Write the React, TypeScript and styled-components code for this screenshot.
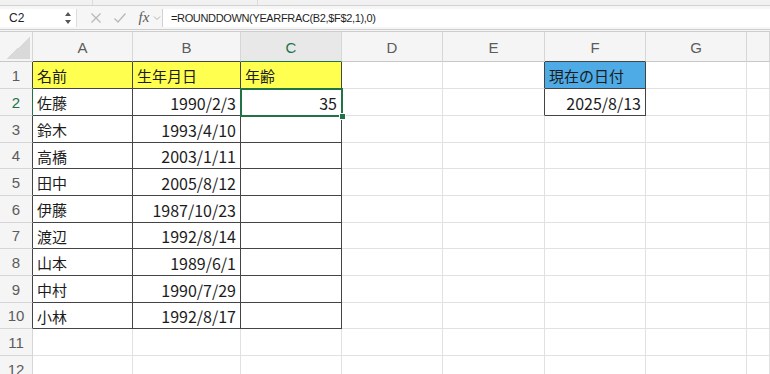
import React, { FC } from 'react';
import styled, { createGlobalStyle } from 'styled-components';

const DARK = '#444444';
const GRID = '#e1e1e1';
const HEAD_LINE = '#d6d6d6';
const GREEN = '#217346';

const GlobalStyle = createGlobalStyle`
  html, body {
    margin: 0;
    padding: 0;
    background: #ffffff;
  }
  body {
    width: 770px;
    height: 374px;
    overflow: hidden;
    font-family: 'Noto Sans CJK JP', 'Noto Sans', sans-serif;
  }
`;

const Window = styled.div`
  display: flex;
  flex-direction: column;
  width: 770px;
  height: 374px;
  overflow: hidden;
`;

const RibbonEdge = styled.div`
  display: grid;
  flex-shrink: 0;
  grid-template-columns: 93px 165px 1fr;
  height: 5px;
  background: #f1f1f1;
  border-bottom: 1px solid #d3d3d3;
`;

const RibbonPart = styled.div`
  border-right: 1px solid #dcdcdc;
`;

const FormulaBar = styled.div`
  display: flex;
  flex-shrink: 0;
  align-items: flex-start;
  height: 23px;
  background: #f6f6f6;
  border-bottom: 3px double #cdcdcd;
`;

const NameBox = styled.div`
  display: flex;
  align-items: center;
  justify-content: space-between;
  box-sizing: border-box;
  width: 77px;
  height: 18px;
  margin-top: 3px;
  padding: 0 4px 0 9px;
  background: #ffffff;
  border-right: 1px solid #dddddd;
  font-family: 'Liberation Sans', Arial, sans-serif;
  font-size: 12px;
  color: #222222;
`;

const Tools = styled.div`
  display: flex;
  align-items: center;
  height: 23px;
  width: 85px;
  padding-left: 12px;
  box-sizing: border-box;
`;

const ToolIcon = styled.span<{ $w: number }>`
  display: flex;
  align-items: center;
  justify-content: center;
  width: ${(p) => p.$w}px;
  height: 23px;
`;

const Fx = styled.span`
  font-family: 'Liberation Serif', 'Times New Roman', serif;
  font-style: italic;
  font-size: 15px;
  color: #5a5a5a;
  line-height: 23px;
`;

const FormulaInput = styled.div`
  flex: 1;
  height: 18px;
  margin-top: 3px;
  padding-left: 8px;
  background: #ffffff;
  border-left: 1px solid #d2d2d2;
  font-family: 'Liberation Sans', Arial, sans-serif;
  font-size: 11px;
  letter-spacing: -0.35px;
  line-height: 18px;
  color: #1f1f1f;
`;

const Sheet = styled.div`
  display: grid;
  flex-shrink: 0;
  grid-template-columns: 33px 100px 108px 101px 101px 102px 101px 101px 1fr;
  grid-template-rows: 30px 27px 27px 27px 26px 27px 27px 26px 27px 27px 26px 27px 27px;
`;

const Corner = styled.div`
  position: relative;
  box-sizing: border-box;
  background: #f5f5f5;
  border-right: 1px solid ${HEAD_LINE};
  border-bottom: 1px solid #c8c8c8;

  &::after {
    content: '';
    position: absolute;
    right: 2px;
    bottom: 2px;
    width: 24px;
    height: 22px;
    background: linear-gradient(to bottom right, transparent 50%, #d9d9d9 50%);
  }
`;

const ColHead = styled.div<{ $active?: boolean; $bottom: string }>`
  display: flex;
  align-items: center;
  justify-content: center;
  box-sizing: border-box;
  background: ${(p) => (p.$active ? '#e8e8e8' : '#f5f5f5')};
  border-right: 1px solid ${HEAD_LINE};
  border-bottom: 1px solid ${(p) => p.$bottom};
  font-family: 'Liberation Sans', Arial, sans-serif;
  font-size: 15px;
  color: ${(p) => (p.$active ? GREEN : '#5c5c5c')};
  padding-top: 1px;
`;

const RowHead = styled.div<{ $active?: boolean; $right: string }>`
  display: flex;
  align-items: center;
  justify-content: center;
  box-sizing: border-box;
  background: #f5f5f5;
  border-right: 1px solid ${(p) => p.$right};
  border-bottom: 1px solid ${HEAD_LINE};
  font-family: 'Liberation Sans', Arial, sans-serif;
  font-size: 15px;
  color: ${(p) => (p.$active ? GREEN : '#5c5c5c')};
`;

const Cell = styled.div<{ $right: string; $bottom: string; $fill?: string; $num?: boolean; $selected?: boolean }>`
  position: ${(p) => (p.$selected ? 'relative' : 'static')};
  display: flex;
  align-items: center;
  justify-content: ${(p) => (p.$num ? 'flex-end' : 'flex-start')};
  box-sizing: border-box;
  padding: 1px 4px 0 4px;
  background: ${(p) => p.$fill || '#ffffff'};
  border-right: 1px solid ${(p) => p.$right};
  border-bottom: 1px solid ${(p) => p.$bottom};
  font-size: ${(p) => (p.$num ? '16px' : '15px')};
  color: #1c1c1c;
  white-space: nowrap;

  ${(p) => p.$selected && `
    &::before {
      content: '';
      position: absolute;
      top: -1px;
      left: -1px;
      right: -2px;
      bottom: -2px;
      border: 2px solid ${GREEN};
    }
    &::after {
      content: '';
      position: absolute;
      right: -5px;
      bottom: -5px;
      width: 5px;
      height: 5px;
      background: ${GREEN};
      border: 1px solid #ffffff;
      z-index: 2;
    }
  `}
`;

const Spinner: FC = () => (
  <svg width='8' height='14' viewBox='0 0 8 14'>
    <path d='M4 1 L7 5 L1 5 Z' fill='#555' />
    <path d='M4 13 L7 9 L1 9 Z' fill='#555' />
  </svg>
);

const CrossIcon: FC = () => (
  <svg width='12' height='12' viewBox='0 0 12 12'>
    <path d='M1.5 1.5 L10.5 10.5 M10.5 1.5 L1.5 10.5' stroke='#b8b8b8' strokeWidth='1.3' fill='none' />
  </svg>
);

const CheckIcon: FC = () => (
  <svg width='14' height='12' viewBox='0 0 14 12'>
    <path d='M1.5 6.5 L5 10 L12.5 1.5' stroke='#b8b8b8' strokeWidth='1.3' fill='none' />
  </svg>
);

const Chevron: FC = () => (
  <svg width='8' height='6' viewBox='0 0 8 6'>
    <path d='M1 1.5 L4 4.5 L7 1.5' stroke='#b0b0b0' strokeWidth='1' fill='none' />
  </svg>
);

const COLS = ['A', 'B', 'C', 'D', 'E', 'F', 'G', ''];

const people = [
  ['佐藤', '1990/2/3'],
  ['鈴木', '1993/4/10'],
  ['高橋', '2003/1/11'],
  ['田中', '2005/8/12'],
  ['伊藤', '1987/10/23'],
  ['渡辺', '1992/8/14'],
  ['山本', '1989/6/1'],
  ['中村', '1990/7/29'],
  ['小林', '1992/8/17'],
];

type CellInfo = { text?: string; num?: boolean; fill?: string };

const cellInfo = (row: number, col: number): CellInfo => {
  if (row === 1) {
    if (col === 0) return { text: '名前', fill: '#ffff50' };
    if (col === 1) return { text: '生年月日', fill: '#ffff50' };
    if (col === 2) return { text: '年齢', fill: '#ffff50' };
    if (col === 5) return { text: '現在の日付', fill: '#4eabe6' };
    return {};
  }
  if (row === 2 && col === 2) return { text: '35', num: true };
  if (row === 2 && col === 5) return { text: '2025/8/13', num: true };
  const person = people[row - 2];
  if (person && col === 0) return { text: person[0] };
  if (person && col === 1) return { text: person[1], num: true };
  return {};
};

const App: FC = () => {
  const rows = Array.from({ length: 12 }, (_, i) => i + 1);
  return (
    <>
      <GlobalStyle />
      <Window>
        <RibbonEdge>
          <RibbonPart />
          <RibbonPart />
          <div />
        </RibbonEdge>
        <FormulaBar>
          <NameBox>
            <span>C2</span>
            <Spinner />
          </NameBox>
          <Tools>
            <ToolIcon $w={14}><CrossIcon /></ToolIcon>
            <ToolIcon $w={10} />
            <ToolIcon $w={14}><CheckIcon /></ToolIcon>
            <ToolIcon $w={9} />
            <ToolIcon $w={16}><Fx>fx</Fx></ToolIcon>
            <ToolIcon $w={9}><Chevron /></ToolIcon>
          </Tools>
          <FormulaInput>=ROUNDDOWN(YEARFRAC(B2,$F$2,1),0)</FormulaInput>
        </FormulaBar>
        <Sheet>
          <Corner />
          {COLS.map((c, i) => {
            let bottom = '#c8c8c8';
            if (i <= 1 || i === 5) bottom = DARK;
            if (i === 2) bottom = GREEN;
            return <ColHead key={`h${c}${i}`} $active={i === 2} $bottom={bottom}>{c}</ColHead>;
          })}
          {rows.map((r) => {
            let headRight = HEAD_LINE;
            if (r <= 10) headRight = r === 2 ? GREEN : DARK;
            return (
              <React.Fragment key={r}>
                <RowHead $active={r === 2} $right={headRight}>{r}</RowHead>
                {COLS.map((c, ci) => {
                  const inTable = r <= 10 && ci <= 2;
                  const inDate = r <= 2 && ci === 5;
                  const right = inTable || inDate || (r <= 2 && ci === 4) ? DARK : GRID;
                  const bottom = inTable || inDate ? DARK : GRID;
                  const info = cellInfo(r, ci);
                  return (
                    <Cell
                      key={`${c}${ci}-${r}`}
                      $right={right}
                      $bottom={bottom}
                      $fill={info.fill}
                      $num={info.num}
                      $selected={r === 2 && ci === 2}
                    >
                      {info.text}
                    </Cell>
                  );
                })}
              </React.Fragment>
            );
          })}
        </Sheet>
      </Window>
    </>
  );
};

export default App;
